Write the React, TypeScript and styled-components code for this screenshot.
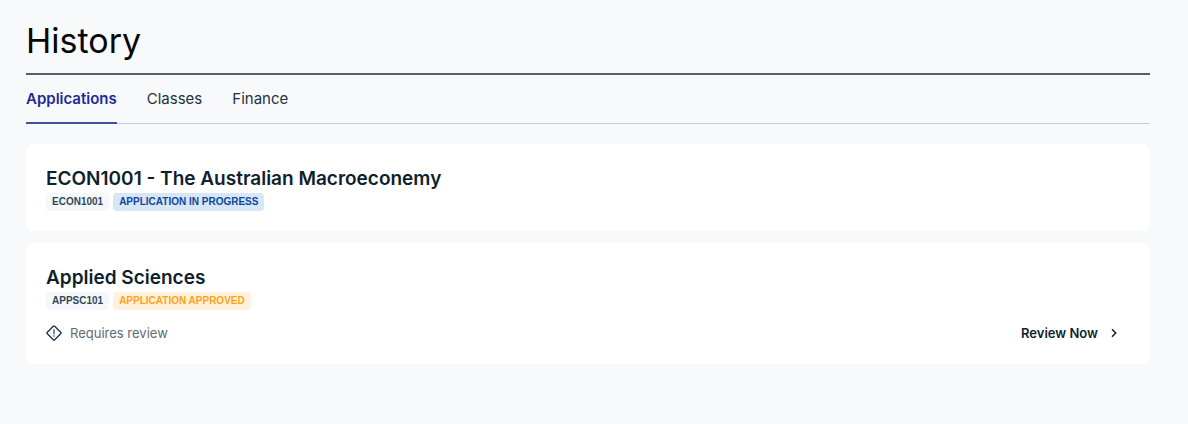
import React, { useState } from "react";
import styled, { createGlobalStyle } from "styled-components";

const GlobalStyle = createGlobalStyle`
  * { box-sizing: border-box; }
  body {
    margin: 0;
    background: #f8f9fb;
    color: #101f2d;
    font-family: Inter, "Liberation Sans", sans-serif;
  }
`;

const Page = styled.main`
  padding: 20px 38px 60px 26px;
`;

const Title = styled.h1`
  margin: 0;
  padding: 1px 0 12px;
  border-bottom: 2px solid #52616d;
  color: #050708;
  font-size: 34px;
  line-height: 40px;
  font-weight: 400;
`;

const TabBar = styled.nav`
  display: flex;
  gap: 30px;
  height: 49px;
  box-shadow: inset 0 -1px #c6cfd8;
`;

const Tab = styled.button<{ $active: boolean }>`
  padding: 0;
  border: 0;
  border-bottom: 2px solid ${(p) => (p.$active ? "#3f51a3" : "transparent")};
  background: none;
  color: ${(p) => (p.$active ? "#1c2b96" : "#22323f")};
  font-family: inherit;
  font-size: 15px;
  line-height: 20px;
  font-weight: ${(p) => (p.$active ? 600 : 400)};
  cursor: pointer;
`;

const CardList = styled.section`
  display: flex;
  flex-direction: column;
  gap: 12px;
  padding-top: 20px;
`;

const Card = styled.article`
  padding: 20px;
  border-radius: 8px;
  background: #fff;
`;

const CardTitle = styled.h2`
  margin: 0;
  color: #101f2d;
  font-size: 19px;
  line-height: 29px;
  font-weight: 600;
`;

const Badges = styled.div`
  display: flex;
  gap: 4px;
`;

const tones = {
  neutral: { bg: "#f4f8fc", fg: "#344854" },
  progress: { bg: "#d8e6f6", fg: "#0d47a1" },
  approved: { bg: "#fff1dc", fg: "#ffa21a" },
};

const Badge = styled.span<{ $tone: keyof typeof tones }>`
  padding: 0 6px;
  border-radius: 4px;
  background: ${(p) => tones[p.$tone].bg};
  color: ${(p) => tones[p.$tone].fg};
  font-family: "Liberation Sans", Arial, sans-serif;
  font-size: 10px;
  line-height: 18px;
  font-weight: 700;
`;

const ReviewRow = styled.div`
  display: flex;
  align-items: center;
  justify-content: space-between;
  height: 22px;
  margin-top: 12px;
`;

const Notice = styled.span`
  display: flex;
  align-items: center;
  gap: 8px;
  color: #5d6b76;
  font-size: 13px;
`;

const ReviewButton = styled.button`
  display: flex;
  align-items: center;
  gap: 8px;
  padding: 0 8px 0 0;
  border: 0;
  background: none;
  color: #101f2d;
  font-family: inherit;
  font-size: 13px;
  line-height: 20px;
  font-weight: 600;
  cursor: pointer;
`;

const AlertIcon = () => (
  <svg width="16" height="16" viewBox="0 0 16 16" fill="none" aria-hidden="true">
    <path d="M7.3 1.3a1 1 0 0 1 1.4 0l6 6a1 1 0 0 1 0 1.4l-6 6a1 1 0 0 1-1.4 0l-6-6a1 1 0 0 1 0-1.4Z" stroke="#1b3342" strokeWidth="1.3" />
    <path d="M8 4.3v4.9M8 10.2v1.5" stroke="#536571" strokeWidth="1.5" />
  </svg>
);

const ChevronIcon = () => (
  <svg width="16" height="16" viewBox="0 0 16 16" fill="none" aria-hidden="true">
    <path d="m6 4.3 3.7 3.7L6 11.7" stroke="#101f2d" strokeWidth="1.5" />
  </svg>
);

type Application = {
  title: string;
  code: string;
  status: string;
  tone: keyof typeof tones;
  review?: boolean;
};

const applications: Application[] = [
  { title: "ECON1001 - The Australian Macroeconemy", code: "ECON1001", status: "APPLICATION IN PROGRESS", tone: "progress" },
  { title: "Applied Sciences", code: "APPSC101", status: "APPLICATION APPROVED", tone: "approved", review: true },
];

const tabs = ["Applications", "Classes", "Finance"];

export default function App() {
  const [active, setActive] = useState(tabs[0]);
  return (
    <Page>
      <GlobalStyle />
      <Title>History</Title>
      <TabBar>
        {tabs.map((t) => (
          <Tab key={t} $active={t === active} onClick={() => setActive(t)}>{t}</Tab>
        ))}
      </TabBar>
      <CardList>
        {applications.map((a) => (
          <Card key={a.code}>
            <CardTitle>{a.title}</CardTitle>
            <Badges>
              <Badge $tone="neutral">{a.code}</Badge>
              <Badge $tone={a.tone}>{a.status}</Badge>
            </Badges>
            {a.review && (
              <ReviewRow>
                <Notice><AlertIcon />Requires review</Notice>
                <ReviewButton>Review Now<ChevronIcon /></ReviewButton>
              </ReviewRow>
            )}
          </Card>
        ))}
      </CardList>
    </Page>
  );
}
